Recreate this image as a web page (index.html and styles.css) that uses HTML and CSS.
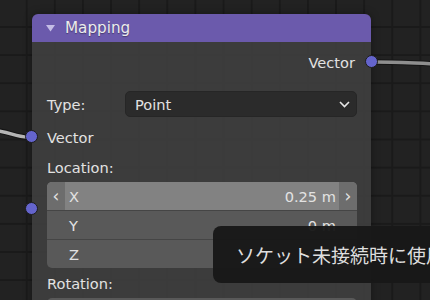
FILE: index.html
```html
<!DOCTYPE html>
<html lang="ja">
<head>
    <meta charset="UTF-8">
    <meta name="viewport" content="width=device-width, initial-scale=1.0">
    <title>Mapping Node</title>
    <link rel="stylesheet" href="styles.css">
</head>
<body>
    <svg class="wires" width="430" height="300" viewBox="0 0 430 300">
        <path d="M -10 130 C 10 131, 14 137, 28 137" class="wire-shadow"/>
        <path d="M -10 130 C 10 131, 14 137, 28 137" class="wire wire-in"/>
        <path d="M 374 62 C 395 62, 410 63, 440 64" class="wire-shadow"/>
        <path d="M 374 62 C 395 62, 410 63, 440 64" class="wire wire-out"/>
    </svg>

    <div class="node">
        <div class="node-header">
            <svg class="collapse" width="9" height="7" viewBox="0 0 9 7">
                <polygon points="0,0 9,0 4.5,6.5"/>
            </svg>
            <span class="node-title">Mapping</span>
        </div>

        <div class="node-body">
            <div class="row output-row">
                <span>Vector</span>
                <span class="socket socket-out"></span>
            </div>

            <div class="row type-row">
                <span class="label">Type:</span>
                <div class="dropdown">
                    <span>Point</span>
                    <svg class="chevron" width="11" height="7" viewBox="0 0 11 7">
                        <polyline points="1,1 5.5,5.5 10,1"/>
                    </svg>
                </div>
            </div>

            <div class="row input-row">
                <span class="socket socket-in"></span>
                <span>Vector</span>
            </div>

            <div class="row label-row location-label">
                <span>Location:</span>
                <span class="socket socket-in socket-loc"></span>
            </div>

            <div class="vector-field">
                <div class="field-row active">
                    <span class="arrow">&lsaquo;</span>
                    <span class="axis">X</span>
                    <span class="value">0.25 m</span>
                    <span class="arrow">&rsaquo;</span>
                </div>
                <div class="field-row">
                    <span class="arrow"></span>
                    <span class="axis">Y</span>
                    <span class="value">0 m</span>
                    <span class="arrow"></span>
                </div>
                <div class="field-row">
                    <span class="arrow"></span>
                    <span class="axis">Z</span>
                    <span class="value">0 m</span>
                    <span class="arrow"></span>
                </div>
            </div>

            <div class="row label-row rotation-label">
                <span>Rotation:</span>
            </div>

            <div class="vector-field">
                <div class="field-row">
                    <span class="arrow"></span>
                    <span class="axis">X</span>
                    <span class="value">0°</span>
                    <span class="arrow"></span>
                </div>
            </div>
        </div>
    </div>

    <div class="tooltip">ソケット未接続時に使用</div>
</body>
</html>
```
FILE: styles.css
```css
body {
    margin: 0;
    width: 430px;
    height: 300px;
    overflow: hidden;
    position: relative;
    font-family: "DejaVu Sans", sans-serif;
    font-size: 14.6px;
    color: #e2e2e2;
    background-color: #222222;
    background-image:
        linear-gradient(#1a1a1a 0 2px, transparent 2px),
        linear-gradient(90deg, #1a1a1a 0 2px, transparent 2px);
    background-size: 28.14px 28.14px;
    background-position: 25.7px 26px;
}

.wires {
    position: absolute;
    left: 0;
    top: 0;
}

.wire-shadow {
    fill: none;
    stroke: #151515;
    stroke-width: 5.5;
}

.wire {
    fill: none;
    stroke-width: 3.5;
}

.wire-in {
    stroke: #b4b4b4;
}

.wire-out {
    stroke: #8e8e8e;
}

.node {
    position: absolute;
    left: 32px;
    top: 14px;
    width: 339px;
    box-shadow: 0 0 8px rgba(0, 0, 0, 0.35);
    border-radius: 6px 6px 0 0;
}

.node-header {
    height: 28px;
    display: flex;
    align-items: center;
    gap: 10px;
    padding-left: 14px;
    background-color: #6b5aac;
    border-radius: 6px 6px 0 0;
}

.collapse polygon {
    fill: #c4bde6;
}

.node-title {
    font-size: 15.2px;
    color: #ececec;
    text-shadow: 0 1px 1px rgba(0, 0, 0, 0.35);
}

.node-body {
    background-color: rgba(62, 62, 62, 0.94);
    padding: 8px 14px 20px 15px;
    display: flex;
    flex-direction: column;
    height: 280px;
}

.row {
    position: relative;
    height: 24px;
    display: flex;
    align-items: center;
}

.output-row {
    justify-content: flex-end;
    padding-right: 2px;
}

.socket {
    position: absolute;
    width: 11px;
    height: 11px;
    border-radius: 50%;
    background-color: #6464cc;
    border: 1px solid #1c1c1c;
}

.socket-out {
    right: -21px;
    top: 5px;
}

.socket-in {
    left: -22px;
    top: 5px;
}

.socket-loc {
    top: 47px;
}

.type-row {
    margin-top: 17px;
    height: 26px;
}

.label {
    width: 78px;
}

.dropdown {
    flex: 1;
    height: 24px;
    display: flex;
    align-items: center;
    justify-content: space-between;
    padding: 0 6px 0 9px;
    background-color: #2b2b2b;
    border: 1px solid #262626;
    border-radius: 5px;
}

.chevron polyline {
    fill: none;
    stroke: #e6e6e6;
    stroke-width: 1.6;
}

.input-row {
    margin-top: 8px;
}

.location-label {
    margin-top: 6px;
}

.vector-field {
    margin-top: 3px;
    border-radius: 5px;
    overflow: hidden;
    display: flex;
    flex-direction: column;
}

.field-row {
    height: 28px;
    display: flex;
    align-items: center;
    background-color: #595959;
    border-bottom: 1px solid #454545;
}

.field-row:last-child {
    border-bottom: none;
}

.field-row.active {
    background-color: #828282;
}

.arrow {
    width: 18px;
    height: 100%;
    display: flex;
    align-items: center;
    justify-content: center;
    font-size: 17px;
}

.field-row.active .arrow {
    background-color: #6d6d6d;
}

.axis {
    width: 40px;
    padding-left: 4px;
}

.value {
    flex: 1;
    text-align: right;
    padding-right: 3px;
}

.rotation-label {
    margin-top: 3px;
}

.tooltip {
    position: absolute;
    left: 213px;
    top: 226px;
    width: 260px;
    height: 57px;
    box-sizing: border-box;
    padding-left: 23px;
    display: flex;
    align-items: center;
    background-color: rgba(24, 24, 24, 0.96);
    border-radius: 8px;
    font-family: "Noto Sans CJK JP", "DejaVu Sans", sans-serif;
    font-size: 19px;
    color: #dedede;
    white-space: nowrap;
}
```
